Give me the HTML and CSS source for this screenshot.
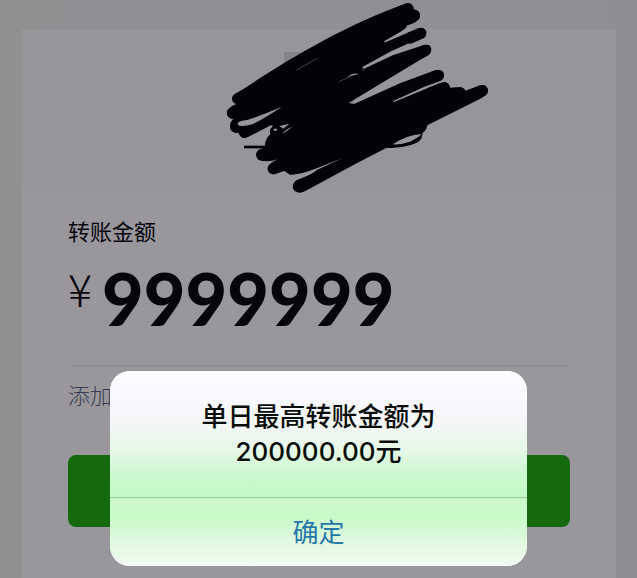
FILE: index.html
```html
<!DOCTYPE html>
<html lang="zh-CN">
<head>
<meta charset="utf-8">
<meta name="viewport" content="width=device-width, initial-scale=1">
<title>转账</title>
<link rel="stylesheet" href="styles.css">
</head>
<body>
<main class="card">
  <header class="payee">
    <span class="avatar"></span>
  </header>
  <section class="transfer">
    <h1 class="label">转账金额</h1>
    <p class="amount"><span class="currency">¥</span><span class="value">9999999</span></p>
    <a class="note" href="#">添加转账说明</a>
    <button class="submit" type="button" aria-label="转账"></button>
  </section>
</main>
<svg class="scribble" viewBox="0 0 900 600" aria-hidden="true">
  <path class="ink" d="M76 284 C190 205 400 75 590 10 Q606 8 609 28 Q632 30 630 50 Q626 66 592 76 L585 88 L522 124 L525 127 L628 84 Q650 82 649 99 Q645 112 620 119 L540 155 L456 202 L462 206 L550 165 L640 136 Q664 130 664 150 Q660 166 635 177 L510 252 L416 309 L432 312 L570 250 L675 211 Q702 207 702 226 Q698 238 676 245 L548 304 L552 306 L690 249 Q716 243 719 263 Q762 258 766 272 L812 255 Q834 255 834 274 Q830 288 805 299 L652 376 Q650 390 637 400 Q640 424 603 435 Q565 446 530 443 L440 490 L290 571 Q270 584 254 573 Q240 558 259 541 L300 525 L322 509 L398 474 L322 504 Q270 525 240 524 L222 512 L192 523 Q170 520 174 500 Q182 487 204 478 Q172 488 146 480 Q132 466 145 450 L164 443 Q165 416 181 403 Q176 388 189 378 L182 375 L110 412 Q92 417 86 399 Q62 398 60 378 Q60 364 71 356 Q48 352 51 333 Q60 318 82 311 Q64 302 70 288Z"/>
  <path class="brush" d="M83 296L320 170M68 340L130 315M77 381L80 379M104 397L180 358M594 26L520 60M613 47L570 64M632 100L600 114M646 151L610 168M685 227L650 240M703 263L660 280M750 278L700 300M817 272L700 330M156 464L220 436M190 506L240 488M268 558L350 518"/>
  <path class="ink line" d="M102 441H174"/>
  <path class="gap" d="M522 128L560 105L588 84L602 80L606 90L560 112Z"/>
  <path class="gap" d="M82 371 Q86 362 112 360 Q160 344 215 320 Q166 354 127 373 Q103 380 88 377Z"/>
  <path class="gap" d="M412 232 Q427 216 447 222 Q426 226 412 232Z"/>
  <path class="gap" d="M548 433 Q590 405 634 402 Q628 412 600 425 Q570 435 548 433Z"/>
  <path class="gap" d="M190 389Q196 382 202 389Q196 397 190 389ZM208 378L238 371L220 386ZM216 402Q225 389 247 380Q235 391 216 402Z"/>
  <path class="glint" d="M260 210L322 175M386 245L420 231M456 211L468 204"/>
</svg>
<div class="overlay">
  <div class="alert" role="alertdialog" aria-labelledby="alert-message">
    <p class="message" id="alert-message">单日最高转账金额为<br>200000.00元</p>
    <button class="confirm" type="button">确定</button>
  </div>
</div>
</body>
</html>
```
FILE: styles.css
```css
* {
  box-sizing: border-box;
}

body {
  position: relative;
  min-height: 100vh;
  margin: 0;
  padding: 29px 21px 0 22px;
  display: flex;
  flex-direction: column;
  overflow-x: hidden;
  background: linear-gradient(90deg, #90908f 0, #908f93 80px, #918f96 200px, #918f96 80%, #908d92);
  color: #06050c;
  font-family: "Noto Sans CJK SC", sans-serif;
}

.card {
  flex: 1;
  background: #99979c;
}

.payee {
  height: 161px;
  padding-top: 23px;
  background: #97959a;
}

.avatar {
  display: block;
  width: 70px;
  height: 70px;
  margin: 0 auto;
  background: #858388;
}

.transfer {
  padding: 24px 46px 50px;
  display: flex;
  flex-direction: column;
}

.label {
  margin: 0;
  font-size: 22px;
  line-height: 32px;
  font-weight: 400;
}

.amount {
  height: 120px;
  margin: 0;
  padding-top: 12px;
  display: flex;
  gap: 10px;
  border-bottom: 1px solid #8f8d94;
}

.currency {
  font-size: 45px;
  line-height: 60px;
  font-weight: 300;
}

.value {
  font-family: Lato, sans-serif;
  font-size: 72px;
  line-height: 80px;
  font-weight: 900;
}

.note {
  margin-top: 12px;
  color: #363b55;
  font-size: 22px;
  line-height: 32px;
  font-weight: 300;
  text-decoration: none;
}

.submit {
  height: 72px;
  margin-top: 45px;
  border: 0;
  border-radius: 8px;
  background: #15690f;
}

.scribble {
  position: absolute;
  top: 0;
  left: 33%;
  width: 300px;
  height: 200px;
}

.ink {
  fill: #030208;
}

.brush {
  fill: none;
  stroke: #030208;
  stroke-width: 34px;
  stroke-linecap: round;
}

.line {
  stroke: #030208;
  stroke-width: 8px;
}

.gap {
  fill: #97959a;
}

.glint {
  fill: none;
  stroke: #626067;
  stroke-width: 2px;
}

.overlay {
  position: absolute;
  inset: 0;
  padding: 0 110px 12px;
  display: flex;
  align-items: flex-end;
}

.alert {
  flex: 1;
  overflow: hidden;
  border-radius: 20px;
  background: #fcfbff;
  text-align: center;
}

.message {
  margin: 0;
  padding: 28px 16px;
  border-bottom: 1px solid #9bcda3;
  background: linear-gradient(#fdfcff 0, #f7f6fa 36%, #e8f8e9 60%, #ccf8cd 84%, #c2fac6);
  color: #080d0a;
  font-family: Inter, "Noto Sans CJK SC", sans-serif;
  font-size: 26px;
  line-height: 35px;
  font-weight: 500;
}

.confirm {
  display: block;
  width: 100%;
  height: 68px;
  padding: 0 0 4px;
  border: 0;
  background: linear-gradient(#ccf8cc, #c8fac8 25%, #def9dd 60%, #f2fcf1);
  color: #2877a9;
  font: inherit;
  font-size: 26px;
}
```
